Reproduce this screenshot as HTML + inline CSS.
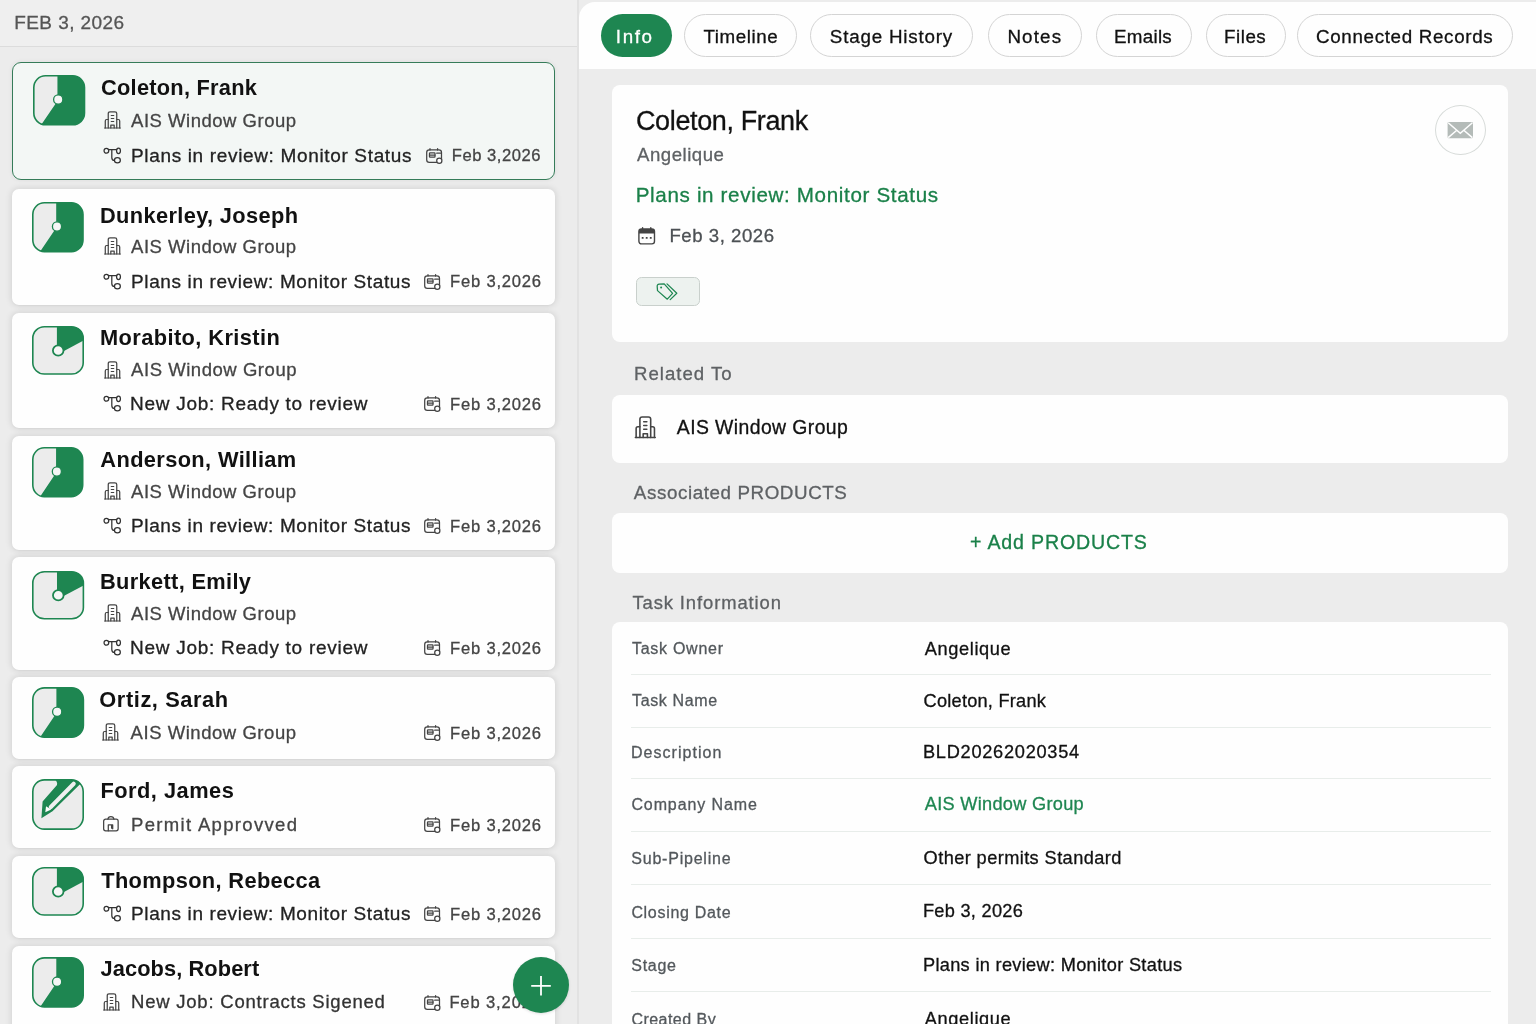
<!DOCTYPE html>
<html lang="en"><head><meta charset="utf-8"><title>Tasks</title>
<style>
html,body{margin:0;padding:0}
body{width:1536px;height:1024px;overflow:hidden;position:relative;background:#ececec;font-family:"Liberation Sans",sans-serif;}
#left{position:absolute;left:0;top:0;width:578px;height:1024px;background:#ececec}
#layer{position:absolute;left:0;top:0;width:1536px;height:1024px;will-change:transform}
.b,.t,.i{position:absolute}
.t{display:block;line-height:1;white-space:nowrap;-webkit-text-stroke:0.3px currentColor}
.t.bd{-webkit-text-stroke:0}
.i{display:block;overflow:visible}
</style></head><body>
<div id="left"></div>
<div id="layer">
<div class="b" style="left:0px;top:0px;width:578px;height:47px;background:#efefef;border-bottom:1px solid #dcdcdc;box-sizing:border-box;"></div>
<span class="t " style="left:14.23px;top:13px;font-size:19.0px;color:#555;letter-spacing:0.427px;">FEB 3, 2026</span>
<div class="b" style="left:12px;top:61.5px;width:543px;height:118.0px;background:#f3f7f5;border:1.5px solid #357c59;border-radius:9px;box-sizing:border-box;box-shadow:0 0 5px rgba(0,0,0,.07);"></div>
<svg class="i" style="left:32.75px;top:74.9px" width="52.3" height="50.6" viewBox="0 0 52 50" preserveAspectRatio="none"><defs><clipPath id="c74"><rect x="0.8" y="0.8" width="50.4" height="48.4" rx="11.6"/></clipPath></defs><rect x="0.8" y="0.8" width="50.4" height="48.4" rx="11.6" fill="#ececec"/><g clip-path="url(#c74)"><path d="M24.3 0H52V50H7.6L25 24.6L24.3 20Z" fill="#1e8651"/></g><rect x="0.8" y="0.8" width="50.4" height="48.4" rx="11.6" fill="none" stroke="#1e8651" stroke-width="1.6"/><circle cx="25.1" cy="24.3" r="4.6" fill="#f6f6f6" stroke="#1e8651" stroke-width="1.3"/></svg>
<span class="t bd" style="left:101.06px;top:77px;font-size:21.8px;color:#111;letter-spacing:0.251px;font-weight:700;">Coleton, Frank</span>
<svg class="i" style="left:103.6px;top:110.89999999999999px" width="17" height="17.8" viewBox="0 0 17 18" ><g fill="none" stroke="#444" stroke-width="1.25" stroke-linejoin="round" stroke-linecap="round"><path d="M0.6 17.2H16.4"/><path d="M4.2 17.2V2.6Q4.2 0.8 6 0.8H11Q12.8 0.8 12.8 2.6V17.2"/><path d="M4.2 8.6H2.6Q1.2 8.6 1.2 10V17.2"/><path d="M12.8 8.6H14.4Q15.8 8.6 15.8 10V17.2"/><path d="M6.8 17.2V14.2H10.2V17.2"/><path d="M7.2 4.6H9.8M7.2 7.6H9.8M7.2 10.6H9.8" stroke-width="1.1"/></g></svg>
<span class="t " style="left:131.11px;top:112px;font-size:18.5px;color:#444;letter-spacing:0.509px;">AIS Window Group</span>
<svg class="i" style="left:103px;top:146.5px" width="19" height="17" viewBox="0 0 19 17" ><g fill="none" stroke="#333" stroke-width="1.25" stroke-linecap="round"><circle cx="3.4" cy="3.8" r="2.35"/><ellipse cx="15.5" cy="3.8" rx="1.95" ry="2.75"/><ellipse cx="14.4" cy="13.2" rx="2.95" ry="2.55"/><path d="M5.4 2.6H13.8"/><path d="M8.8 2.6V10.4Q8.8 13.4 11.4 13.4"/></g></svg>
<span class="t " style="left:131.00px;top:146px;font-size:19.0px;color:#222;letter-spacing:0.656px;">Plans in review: Monitor Status</span>
<svg class="i" style="left:425.8px;top:147.6px" width="16.6" height="16" viewBox="0 0 16.6 16" ><g fill="none" stroke="#444" stroke-width="1.25" stroke-linecap="round" stroke-linejoin="round"><rect x="0.7" y="1.8" width="14.8" height="12.6" rx="2.6"/><path d="M4 0.6V2M11.6 0.6V2"/><rect x="3.5" y="4.9" width="5.5" height="4.3" rx="0.5"/><path d="M3.5 7.05H9M10.7 5.2H14.6"/><circle cx="13.3" cy="12.7" r="2.6" fill="#fff"/></g></svg>
<span class="t " style="left:451.78px;top:148px;font-size:16.6px;color:#444;letter-spacing:0.534px;">Feb 3,2026</span>
<div class="b" style="left:12px;top:189px;width:543px;height:116.30000000000001px;background:#fefefe;border-radius:7px;box-shadow:0 0 6px 1px rgba(0,0,0,.105),0 1px 2px rgba(0,0,0,.04);"></div>
<svg class="i" style="left:32.3px;top:202.3px" width="51.8" height="50.4" viewBox="0 0 52 50" preserveAspectRatio="none"><defs><clipPath id="c202"><rect x="0.8" y="0.8" width="50.4" height="48.4" rx="11.6"/></clipPath></defs><rect x="0.8" y="0.8" width="50.4" height="48.4" rx="11.6" fill="#ececec"/><g clip-path="url(#c202)"><path d="M24.3 0H52V50H7.6L25 24.6L24.3 20Z" fill="#1e8651"/></g><rect x="0.8" y="0.8" width="50.4" height="48.4" rx="11.6" fill="none" stroke="#1e8651" stroke-width="1.6"/><circle cx="25.1" cy="24.3" r="4.6" fill="#f6f6f6" stroke="#1e8651" stroke-width="1.3"/></svg>
<span class="t bd" style="left:100.00px;top:205px;font-size:21.8px;color:#111;letter-spacing:0.359px;font-weight:700;">Dunkerley, Joseph</span>
<svg class="i" style="left:103.6px;top:237.10000000000002px" width="17" height="17.8" viewBox="0 0 17 18" ><g fill="none" stroke="#444" stroke-width="1.25" stroke-linejoin="round" stroke-linecap="round"><path d="M0.6 17.2H16.4"/><path d="M4.2 17.2V2.6Q4.2 0.8 6 0.8H11Q12.8 0.8 12.8 2.6V17.2"/><path d="M4.2 8.6H2.6Q1.2 8.6 1.2 10V17.2"/><path d="M12.8 8.6H14.4Q15.8 8.6 15.8 10V17.2"/><path d="M6.8 17.2V14.2H10.2V17.2"/><path d="M7.2 4.6H9.8M7.2 7.6H9.8M7.2 10.6H9.8" stroke-width="1.1"/></g></svg>
<span class="t " style="left:131.11px;top:238px;font-size:18.5px;color:#444;letter-spacing:0.509px;">AIS Window Group</span>
<svg class="i" style="left:103px;top:272.5px" width="19" height="17" viewBox="0 0 19 17" ><g fill="none" stroke="#333" stroke-width="1.25" stroke-linecap="round"><circle cx="3.4" cy="3.8" r="2.35"/><ellipse cx="15.5" cy="3.8" rx="1.95" ry="2.75"/><ellipse cx="14.4" cy="13.2" rx="2.95" ry="2.55"/><path d="M5.4 2.6H13.8"/><path d="M8.8 2.6V10.4Q8.8 13.4 11.4 13.4"/></g></svg>
<span class="t " style="left:131.00px;top:272px;font-size:19.0px;color:#222;letter-spacing:0.622px;">Plans in review: Monitor Status</span>
<svg class="i" style="left:423.6px;top:273.59999999999997px" width="16.6" height="16" viewBox="0 0 16.6 16" ><g fill="none" stroke="#444" stroke-width="1.25" stroke-linecap="round" stroke-linejoin="round"><rect x="0.7" y="1.8" width="14.8" height="12.6" rx="2.6"/><path d="M4 0.6V2M11.6 0.6V2"/><rect x="3.5" y="4.9" width="5.5" height="4.3" rx="0.5"/><path d="M3.5 7.05H9M10.7 5.2H14.6"/><circle cx="13.3" cy="12.7" r="2.6" fill="#fff"/></g></svg>
<span class="t " style="left:450.00px;top:274px;font-size:16.6px;color:#444;letter-spacing:0.793px;">Feb 3,2026</span>
<div class="b" style="left:12px;top:312.8px;width:543px;height:115.59999999999997px;background:#fefefe;border-radius:7px;box-shadow:0 0 6px 1px rgba(0,0,0,.105),0 1px 2px rgba(0,0,0,.04);"></div>
<svg class="i" style="left:31.9px;top:326.1px" width="52" height="48.8" viewBox="0 0 52 50" preserveAspectRatio="none"><defs><clipPath id="c326"><rect x="0.8" y="0.8" width="50.4" height="48.4" rx="11.6"/></clipPath></defs><rect x="0.8" y="0.8" width="50.4" height="48.4" rx="11.6" fill="#ececec"/><g clip-path="url(#c326)"><path d="M24.9 0H52V14.6L26.4 28.6L24.9 25Z" fill="#1e8651"/></g><rect x="0.8" y="0.8" width="50.4" height="48.4" rx="11.6" fill="none" stroke="#1e8651" stroke-width="1.6"/><circle cx="26.2" cy="25.1" r="5.3" fill="#f6f6f6" stroke="#1e8651" stroke-width="1.8"/></svg>
<span class="t bd" style="left:100.00px;top:327px;font-size:21.8px;color:#111;letter-spacing:0.413px;font-weight:700;">Morabito, Kristin</span>
<svg class="i" style="left:103.6px;top:360.6px" width="17" height="17.8" viewBox="0 0 17 18" ><g fill="none" stroke="#444" stroke-width="1.25" stroke-linejoin="round" stroke-linecap="round"><path d="M0.6 17.2H16.4"/><path d="M4.2 17.2V2.6Q4.2 0.8 6 0.8H11Q12.8 0.8 12.8 2.6V17.2"/><path d="M4.2 8.6H2.6Q1.2 8.6 1.2 10V17.2"/><path d="M12.8 8.6H14.4Q15.8 8.6 15.8 10V17.2"/><path d="M6.8 17.2V14.2H10.2V17.2"/><path d="M7.2 4.6H9.8M7.2 7.6H9.8M7.2 10.6H9.8" stroke-width="1.1"/></g></svg>
<span class="t " style="left:131.11px;top:361px;font-size:18.5px;color:#444;letter-spacing:0.538px;">AIS Window Group</span>
<svg class="i" style="left:103px;top:394.7px" width="19" height="17" viewBox="0 0 19 17" ><g fill="none" stroke="#333" stroke-width="1.25" stroke-linecap="round"><circle cx="3.4" cy="3.8" r="2.35"/><ellipse cx="15.5" cy="3.8" rx="1.95" ry="2.75"/><ellipse cx="14.4" cy="13.2" rx="2.95" ry="2.55"/><path d="M5.4 2.6H13.8"/><path d="M8.8 2.6V10.4Q8.8 13.4 11.4 13.4"/></g></svg>
<span class="t " style="left:130.00px;top:394px;font-size:19.0px;color:#222;letter-spacing:0.729px;">New Job: Ready to review</span>
<svg class="i" style="left:423.6px;top:396.09999999999997px" width="16.6" height="16" viewBox="0 0 16.6 16" ><g fill="none" stroke="#444" stroke-width="1.25" stroke-linecap="round" stroke-linejoin="round"><rect x="0.7" y="1.8" width="14.8" height="12.6" rx="2.6"/><path d="M4 0.6V2M11.6 0.6V2"/><rect x="3.5" y="4.9" width="5.5" height="4.3" rx="0.5"/><path d="M3.5 7.05H9M10.7 5.2H14.6"/><circle cx="13.3" cy="12.7" r="2.6" fill="#fff"/></g></svg>
<span class="t " style="left:450.00px;top:397px;font-size:16.6px;color:#444;letter-spacing:0.793px;">Feb 3,2026</span>
<div class="b" style="left:12px;top:436px;width:543px;height:114.29999999999995px;background:#fefefe;border-radius:7px;box-shadow:0 0 6px 1px rgba(0,0,0,.105),0 1px 2px rgba(0,0,0,.04);"></div>
<svg class="i" style="left:32.4px;top:447.25px" width="51.5" height="50.5" viewBox="0 0 52 50" preserveAspectRatio="none"><defs><clipPath id="c447"><rect x="0.8" y="0.8" width="50.4" height="48.4" rx="11.6"/></clipPath></defs><rect x="0.8" y="0.8" width="50.4" height="48.4" rx="11.6" fill="#ececec"/><g clip-path="url(#c447)"><path d="M24.3 0H52V50H7.6L25 24.6L24.3 20Z" fill="#1e8651"/></g><rect x="0.8" y="0.8" width="50.4" height="48.4" rx="11.6" fill="none" stroke="#1e8651" stroke-width="1.6"/><circle cx="25.1" cy="24.3" r="4.6" fill="#f6f6f6" stroke="#1e8651" stroke-width="1.3"/></svg>
<span class="t bd" style="left:100.36px;top:449px;font-size:21.8px;color:#111;letter-spacing:0.368px;font-weight:700;">Anderson, William</span>
<svg class="i" style="left:103.6px;top:482.3px" width="17" height="17.8" viewBox="0 0 17 18" ><g fill="none" stroke="#444" stroke-width="1.25" stroke-linejoin="round" stroke-linecap="round"><path d="M0.6 17.2H16.4"/><path d="M4.2 17.2V2.6Q4.2 0.8 6 0.8H11Q12.8 0.8 12.8 2.6V17.2"/><path d="M4.2 8.6H2.6Q1.2 8.6 1.2 10V17.2"/><path d="M12.8 8.6H14.4Q15.8 8.6 15.8 10V17.2"/><path d="M6.8 17.2V14.2H10.2V17.2"/><path d="M7.2 4.6H9.8M7.2 7.6H9.8M7.2 10.6H9.8" stroke-width="1.1"/></g></svg>
<span class="t " style="left:131.11px;top:483px;font-size:18.5px;color:#444;letter-spacing:0.509px;">AIS Window Group</span>
<svg class="i" style="left:103px;top:517px" width="19" height="17" viewBox="0 0 19 17" ><g fill="none" stroke="#333" stroke-width="1.25" stroke-linecap="round"><circle cx="3.4" cy="3.8" r="2.35"/><ellipse cx="15.5" cy="3.8" rx="1.95" ry="2.75"/><ellipse cx="14.4" cy="13.2" rx="2.95" ry="2.55"/><path d="M5.4 2.6H13.8"/><path d="M8.8 2.6V10.4Q8.8 13.4 11.4 13.4"/></g></svg>
<span class="t " style="left:131.00px;top:516px;font-size:19.0px;color:#222;letter-spacing:0.622px;">Plans in review: Monitor Status</span>
<svg class="i" style="left:423.6px;top:518.4px" width="16.6" height="16" viewBox="0 0 16.6 16" ><g fill="none" stroke="#444" stroke-width="1.25" stroke-linecap="round" stroke-linejoin="round"><rect x="0.7" y="1.8" width="14.8" height="12.6" rx="2.6"/><path d="M4 0.6V2M11.6 0.6V2"/><rect x="3.5" y="4.9" width="5.5" height="4.3" rx="0.5"/><path d="M3.5 7.05H9M10.7 5.2H14.6"/><circle cx="13.3" cy="12.7" r="2.6" fill="#fff"/></g></svg>
<span class="t " style="left:450.00px;top:519px;font-size:16.6px;color:#444;letter-spacing:0.793px;">Feb 3,2026</span>
<div class="b" style="left:12px;top:557px;width:543px;height:113.29999999999995px;background:#fefefe;border-radius:7px;box-shadow:0 0 6px 1px rgba(0,0,0,.105),0 1px 2px rgba(0,0,0,.04);"></div>
<svg class="i" style="left:31.7px;top:570.8px" width="52.2" height="48.5" viewBox="0 0 52 50" preserveAspectRatio="none"><defs><clipPath id="c570"><rect x="0.8" y="0.8" width="50.4" height="48.4" rx="11.6"/></clipPath></defs><rect x="0.8" y="0.8" width="50.4" height="48.4" rx="11.6" fill="#ececec"/><g clip-path="url(#c570)"><path d="M24.9 0H52V14.6L26.4 28.6L24.9 25Z" fill="#1e8651"/></g><rect x="0.8" y="0.8" width="50.4" height="48.4" rx="11.6" fill="none" stroke="#1e8651" stroke-width="1.6"/><circle cx="26.2" cy="25.1" r="5.3" fill="#f6f6f6" stroke="#1e8651" stroke-width="1.8"/></svg>
<span class="t bd" style="left:100.00px;top:571px;font-size:21.8px;color:#111;letter-spacing:0.337px;font-weight:700;">Burkett, Emily</span>
<svg class="i" style="left:103.6px;top:604.0px" width="17" height="17.8" viewBox="0 0 17 18" ><g fill="none" stroke="#444" stroke-width="1.25" stroke-linejoin="round" stroke-linecap="round"><path d="M0.6 17.2H16.4"/><path d="M4.2 17.2V2.6Q4.2 0.8 6 0.8H11Q12.8 0.8 12.8 2.6V17.2"/><path d="M4.2 8.6H2.6Q1.2 8.6 1.2 10V17.2"/><path d="M12.8 8.6H14.4Q15.8 8.6 15.8 10V17.2"/><path d="M6.8 17.2V14.2H10.2V17.2"/><path d="M7.2 4.6H9.8M7.2 7.6H9.8M7.2 10.6H9.8" stroke-width="1.1"/></g></svg>
<span class="t " style="left:131.11px;top:605px;font-size:18.5px;color:#444;letter-spacing:0.509px;">AIS Window Group</span>
<svg class="i" style="left:103px;top:639px" width="19" height="17" viewBox="0 0 19 17" ><g fill="none" stroke="#333" stroke-width="1.25" stroke-linecap="round"><circle cx="3.4" cy="3.8" r="2.35"/><ellipse cx="15.5" cy="3.8" rx="1.95" ry="2.75"/><ellipse cx="14.4" cy="13.2" rx="2.95" ry="2.55"/><path d="M5.4 2.6H13.8"/><path d="M8.8 2.6V10.4Q8.8 13.4 11.4 13.4"/></g></svg>
<span class="t " style="left:130.00px;top:638px;font-size:19.0px;color:#222;letter-spacing:0.729px;">New Job: Ready to review</span>
<svg class="i" style="left:423.6px;top:640.4px" width="16.6" height="16" viewBox="0 0 16.6 16" ><g fill="none" stroke="#444" stroke-width="1.25" stroke-linecap="round" stroke-linejoin="round"><rect x="0.7" y="1.8" width="14.8" height="12.6" rx="2.6"/><path d="M4 0.6V2M11.6 0.6V2"/><rect x="3.5" y="4.9" width="5.5" height="4.3" rx="0.5"/><path d="M3.5 7.05H9M10.7 5.2H14.6"/><circle cx="13.3" cy="12.7" r="2.6" fill="#fff"/></g></svg>
<span class="t " style="left:450.00px;top:641px;font-size:16.6px;color:#444;letter-spacing:0.793px;">Feb 3,2026</span>
<div class="b" style="left:12px;top:677px;width:543px;height:82.39999999999998px;background:#fefefe;border-radius:7px;box-shadow:0 0 6px 1px rgba(0,0,0,.105),0 1px 2px rgba(0,0,0,.04);"></div>
<svg class="i" style="left:31.9px;top:687.25px" width="52.2" height="51" viewBox="0 0 52 50" preserveAspectRatio="none"><defs><clipPath id="c687"><rect x="0.8" y="0.8" width="50.4" height="48.4" rx="11.6"/></clipPath></defs><rect x="0.8" y="0.8" width="50.4" height="48.4" rx="11.6" fill="#ececec"/><g clip-path="url(#c687)"><path d="M24.3 0H52V50H7.6L25 24.6L24.3 20Z" fill="#1e8651"/></g><rect x="0.8" y="0.8" width="50.4" height="48.4" rx="11.6" fill="none" stroke="#1e8651" stroke-width="1.6"/><circle cx="25.1" cy="24.3" r="4.6" fill="#f6f6f6" stroke="#1e8651" stroke-width="1.3"/></svg>
<span class="t bd" style="left:99.27px;top:689px;font-size:21.8px;color:#111;letter-spacing:0.591px;font-weight:700;">Ortiz, Sarah</span>
<svg class="i" style="left:102.4px;top:723.4px" width="17" height="17.8" viewBox="0 0 17 18" ><g fill="none" stroke="#444" stroke-width="1.25" stroke-linejoin="round" stroke-linecap="round"><path d="M0.6 17.2H16.4"/><path d="M4.2 17.2V2.6Q4.2 0.8 6 0.8H11Q12.8 0.8 12.8 2.6V17.2"/><path d="M4.2 8.6H2.6Q1.2 8.6 1.2 10V17.2"/><path d="M12.8 8.6H14.4Q15.8 8.6 15.8 10V17.2"/><path d="M6.8 17.2V14.2H10.2V17.2"/><path d="M7.2 4.6H9.8M7.2 7.6H9.8M7.2 10.6H9.8" stroke-width="1.1"/></g></svg>
<span class="t " style="left:130.58px;top:724px;font-size:18.5px;color:#444;letter-spacing:0.542px;">AIS Window Group</span>
<svg class="i" style="left:423.6px;top:725.4px" width="16.6" height="16" viewBox="0 0 16.6 16" ><g fill="none" stroke="#444" stroke-width="1.25" stroke-linecap="round" stroke-linejoin="round"><rect x="0.7" y="1.8" width="14.8" height="12.6" rx="2.6"/><path d="M4 0.6V2M11.6 0.6V2"/><rect x="3.5" y="4.9" width="5.5" height="4.3" rx="0.5"/><path d="M3.5 7.05H9M10.7 5.2H14.6"/><circle cx="13.3" cy="12.7" r="2.6" fill="#fff"/></g></svg>
<span class="t " style="left:450.00px;top:726px;font-size:16.6px;color:#444;letter-spacing:0.793px;">Feb 3,2026</span>
<div class="b" style="left:12px;top:765.6px;width:543px;height:82.79999999999995px;background:#fefefe;border-radius:7px;box-shadow:0 0 6px 1px rgba(0,0,0,.105),0 1px 2px rgba(0,0,0,.04);"></div>
<svg class="i" style="left:31.9px;top:778.6px" width="52" height="51" viewBox="0 0 52 50" preserveAspectRatio="none"><defs><clipPath id="c778"><rect x="0.8" y="0.8" width="50.4" height="48.4" rx="11.6"/></clipPath></defs><rect x="0.8" y="0.8" width="50.4" height="48.4" rx="11.6" fill="#ececec"/><g clip-path="url(#c778)"><path d="M22.5 0Q25.8 3 25 6L10.6 22L9.4 38.4L20.5 31.6L48.5 4.6L52 0Z" fill="#1e8651"/><path d="M18.8 27.4L41.7 4.7" stroke="#efefef" stroke-width="4.1" stroke-linecap="round"/><path d="M14 26.6L19.2 29.8L13.3 32.6Z" fill="#fdfdfd"/></g><rect x="0.8" y="0.8" width="50.4" height="48.4" rx="11.6" fill="none" stroke="#1e8651" stroke-width="1.6"/></svg>
<span class="t bd" style="left:100.39px;top:780px;font-size:21.8px;color:#111;letter-spacing:0.504px;font-weight:700;">Ford, James</span>
<svg class="i" style="left:103.2px;top:816.4px" width="15.8" height="15.5" viewBox="0 0 15.8 15.5" ><g fill="none" stroke="#444" stroke-width="1.25" stroke-linejoin="round" stroke-linecap="round"><rect x="0.65" y="3.2" width="14.5" height="11.6" rx="2"/><path d="M4.9 3.2Q5.2 0.65 7.9 0.65Q10.6 0.65 10.9 3.2"/><path d="M5.3 14.8V8.9H9.7V12.8M8.6 8.9V12.2"/></g></svg>
<span class="t " style="left:131.00px;top:816px;font-size:18.5px;color:#444;letter-spacing:1.333px;">Permit Approvved</span>
<svg class="i" style="left:423.6px;top:817.1999999999999px" width="16.6" height="16" viewBox="0 0 16.6 16" ><g fill="none" stroke="#444" stroke-width="1.25" stroke-linecap="round" stroke-linejoin="round"><rect x="0.7" y="1.8" width="14.8" height="12.6" rx="2.6"/><path d="M4 0.6V2M11.6 0.6V2"/><rect x="3.5" y="4.9" width="5.5" height="4.3" rx="0.5"/><path d="M3.5 7.05H9M10.7 5.2H14.6"/><circle cx="13.3" cy="12.7" r="2.6" fill="#fff"/></g></svg>
<span class="t " style="left:450.00px;top:818px;font-size:16.6px;color:#444;letter-spacing:0.793px;">Feb 3,2026</span>
<div class="b" style="left:12px;top:855.9px;width:543px;height:82.10000000000002px;background:#fefefe;border-radius:7px;box-shadow:0 0 6px 1px rgba(0,0,0,.105),0 1px 2px rgba(0,0,0,.04);"></div>
<svg class="i" style="left:31.9px;top:867.1px" width="52" height="48.8" viewBox="0 0 52 50" preserveAspectRatio="none"><defs><clipPath id="c867"><rect x="0.8" y="0.8" width="50.4" height="48.4" rx="11.6"/></clipPath></defs><rect x="0.8" y="0.8" width="50.4" height="48.4" rx="11.6" fill="#ececec"/><g clip-path="url(#c867)"><path d="M24.9 0H52V14.6L26.4 28.6L24.9 25Z" fill="#1e8651"/></g><rect x="0.8" y="0.8" width="50.4" height="48.4" rx="11.6" fill="none" stroke="#1e8651" stroke-width="1.6"/><circle cx="26.2" cy="25.1" r="5.3" fill="#f6f6f6" stroke="#1e8651" stroke-width="1.8"/></svg>
<span class="t bd" style="left:101.23px;top:870px;font-size:21.8px;color:#111;letter-spacing:0.361px;font-weight:700;">Thompson, Rebecca</span>
<svg class="i" style="left:103px;top:905px" width="19" height="17" viewBox="0 0 19 17" ><g fill="none" stroke="#333" stroke-width="1.25" stroke-linecap="round"><circle cx="3.4" cy="3.8" r="2.35"/><ellipse cx="15.5" cy="3.8" rx="1.95" ry="2.75"/><ellipse cx="14.4" cy="13.2" rx="2.95" ry="2.55"/><path d="M5.4 2.6H13.8"/><path d="M8.8 2.6V10.4Q8.8 13.4 11.4 13.4"/></g></svg>
<span class="t " style="left:131.00px;top:904px;font-size:19.0px;color:#222;letter-spacing:0.622px;">Plans in review: Monitor Status</span>
<svg class="i" style="left:423.6px;top:906.4px" width="16.6" height="16" viewBox="0 0 16.6 16" ><g fill="none" stroke="#444" stroke-width="1.25" stroke-linecap="round" stroke-linejoin="round"><rect x="0.7" y="1.8" width="14.8" height="12.6" rx="2.6"/><path d="M4 0.6V2M11.6 0.6V2"/><rect x="3.5" y="4.9" width="5.5" height="4.3" rx="0.5"/><path d="M3.5 7.05H9M10.7 5.2H14.6"/><circle cx="13.3" cy="12.7" r="2.6" fill="#fff"/></g></svg>
<span class="t " style="left:450.00px;top:907px;font-size:16.6px;color:#444;letter-spacing:0.793px;">Feb 3,2026</span>
<div class="b" style="left:12px;top:946px;width:543px;height:94px;background:#fefefe;border-radius:7px;box-shadow:0 0 6px 1px rgba(0,0,0,.105),0 1px 2px rgba(0,0,0,.04);"></div>
<svg class="i" style="left:31.9px;top:956.7px" width="52" height="50.8" viewBox="0 0 52 50" preserveAspectRatio="none"><defs><clipPath id="c956"><rect x="0.8" y="0.8" width="50.4" height="48.4" rx="11.6"/></clipPath></defs><rect x="0.8" y="0.8" width="50.4" height="48.4" rx="11.6" fill="#ececec"/><g clip-path="url(#c956)"><path d="M24.3 0H52V50H7.6L25 24.6L24.3 20Z" fill="#1e8651"/></g><rect x="0.8" y="0.8" width="50.4" height="48.4" rx="11.6" fill="none" stroke="#1e8651" stroke-width="1.6"/><circle cx="25.1" cy="24.3" r="4.6" fill="#f6f6f6" stroke="#1e8651" stroke-width="1.3"/></svg>
<span class="t bd" style="left:100.49px;top:958px;font-size:21.8px;color:#111;letter-spacing:0.095px;font-weight:700;">Jacobs, Robert</span>
<svg class="i" style="left:103.2px;top:992.6999999999999px" width="17" height="17.8" viewBox="0 0 17 18" ><g fill="none" stroke="#444" stroke-width="1.25" stroke-linejoin="round" stroke-linecap="round"><path d="M0.6 17.2H16.4"/><path d="M4.2 17.2V2.6Q4.2 0.8 6 0.8H11Q12.8 0.8 12.8 2.6V17.2"/><path d="M4.2 8.6H2.6Q1.2 8.6 1.2 10V17.2"/><path d="M12.8 8.6H14.4Q15.8 8.6 15.8 10V17.2"/><path d="M6.8 17.2V14.2H10.2V17.2"/><path d="M7.2 4.6H9.8M7.2 7.6H9.8M7.2 10.6H9.8" stroke-width="1.1"/></g></svg>
<span class="t " style="left:131.00px;top:993px;font-size:18.5px;color:#333;letter-spacing:0.778px;">New Job: Contracts Sigened</span>
<svg class="i" style="left:423.6px;top:994.8px" width="16.6" height="16" viewBox="0 0 16.6 16" ><g fill="none" stroke="#444" stroke-width="1.25" stroke-linecap="round" stroke-linejoin="round"><rect x="0.7" y="1.8" width="14.8" height="12.6" rx="2.6"/><path d="M4 0.6V2M11.6 0.6V2"/><rect x="3.5" y="4.9" width="5.5" height="4.3" rx="0.5"/><path d="M3.5 7.05H9M10.7 5.2H14.6"/><circle cx="13.3" cy="12.7" r="2.6" fill="#fff"/></g></svg>
<span class="t " style="left:449.38px;top:995px;font-size:16.6px;color:#444;letter-spacing:0.860px;">Feb 3,2026</span>
<div class="b" style="left:513px;top:957px;width:56px;height:56px;background:#1e8651;border-radius:50%;box-shadow:0 1px 3px rgba(0,0,0,.12);"><svg width="56" height="56" viewBox="0 0 56 56"><path d="M18.2 28.8H37.8M28 19V38.6" stroke="#fff" stroke-width="1.8" fill="none"/></svg></div>
<div class="b" style="left:577px;top:0px;width:1.5px;height:1024px;background:#e2e2e2;"></div>
<div class="b" style="left:578.8px;top:1.7px;width:960px;height:67.1px;background:#fefefe;border-top-left-radius:16px;"></div>
<div class="b" style="left:600.9px;top:14.2px;width:70.89999999999998px;height:42.6px;background:#1e8651;border-radius:22px;"></div>
<span class="t " style="left:615.86px;top:28px;font-size:18.8px;color:#fff;letter-spacing:1.552px;">Info</span>
<div class="b" style="left:684.4px;top:13.6px;width:113.10000000000002px;height:43.6px;background:#fefefe;border:1px solid #d4d4d4;border-radius:22px;box-sizing:border-box;"></div>
<span class="t " style="left:703.48px;top:28px;font-size:18.8px;color:#111;letter-spacing:0.561px;">Timeline</span>
<div class="b" style="left:810px;top:13.6px;width:163.29999999999995px;height:43.6px;background:#fefefe;border:1px solid #d4d4d4;border-radius:22px;box-sizing:border-box;"></div>
<span class="t " style="left:829.87px;top:28px;font-size:18.8px;color:#111;letter-spacing:0.796px;">Stage History</span>
<div class="b" style="left:987.5px;top:13.6px;width:94.5px;height:43.6px;background:#fefefe;border:1px solid #d4d4d4;border-radius:22px;box-sizing:border-box;"></div>
<span class="t " style="left:1007.40px;top:28px;font-size:18.8px;color:#111;letter-spacing:1.156px;">Notes</span>
<div class="b" style="left:1095.5px;top:13.6px;width:96.70000000000005px;height:43.6px;background:#fefefe;border:1px solid #d4d4d4;border-radius:22px;box-sizing:border-box;"></div>
<span class="t " style="left:1114.00px;top:28px;font-size:18.8px;color:#111;letter-spacing:0.275px;">Emails</span>
<div class="b" style="left:1205.5px;top:13.6px;width:80.29999999999995px;height:43.6px;background:#fefefe;border:1px solid #d4d4d4;border-radius:22px;box-sizing:border-box;"></div>
<span class="t " style="left:1224.09px;top:28px;font-size:18.8px;color:#111;letter-spacing:0.494px;">Files</span>
<div class="b" style="left:1297px;top:13.6px;width:216px;height:43.6px;background:#fefefe;border:1px solid #d4d4d4;border-radius:22px;box-sizing:border-box;"></div>
<span class="t " style="left:1315.99px;top:28px;font-size:18.8px;color:#111;letter-spacing:0.668px;">Connected Records</span>
<div class="b" style="left:612px;top:84.8px;width:896px;height:257.2px;background:#fefefe;border-radius:8px;"></div>
<span class="t " style="left:636.00px;top:108px;font-size:27px;color:#111;letter-spacing:-0.374px;">Coleton, Frank</span>
<span class="t " style="left:637.04px;top:146px;font-size:18.6px;color:#5e6164;letter-spacing:0.516px;">Angelique</span>
<span class="t " style="left:635.73px;top:185px;font-size:20.6px;color:#1a8049;letter-spacing:0.654px;">Plans in review: Monitor Status</span>
<svg class="i" style="left:637.6px;top:227.2px" width="17.4" height="17.8" viewBox="0 0 17.4 17.8" ><g fill="none" stroke="#444" stroke-width="1.4" stroke-linejoin="round" stroke-linecap="round"><rect x="0.9" y="2" width="15.6" height="14.9" rx="2.6"/><path d="M4.6 0.7V2.4M12.8 0.7V2.4"/></g><path d="M0.9 6.4V4.6Q0.9 2 3.5 2H13.9Q16.5 2 16.5 4.6V6.4Z" fill="#444"/><g fill="#444"><rect x="3.7" y="9.9" width="1.9" height="1.9" rx=".4"/><rect x="7.75" y="9.9" width="1.9" height="1.9" rx=".4"/><rect x="11.8" y="9.9" width="1.9" height="1.9" rx=".4"/></g></svg>
<span class="t " style="left:669.44px;top:227px;font-size:18.6px;color:#4c5054;letter-spacing:0.539px;">Feb 3, 2026</span>
<div class="b" style="left:636.1px;top:277.3px;width:63.8px;height:29px;background:#edf2ef;border:1px solid #c9d0cc;border-radius:5.5px;box-sizing:border-box;"></div>
<svg class="i" style="left:656.4px;top:283.4px" width="22" height="17.4" viewBox="0 0 22 17.4" ><g fill="none" stroke="#1e8651" stroke-width="1.25" stroke-linejoin="round" stroke-linecap="round"><path d="M1.2 3.6Q0.9 1.3 3.2 1.2L8.2 0.9L16.6 10.4L11.3 16.2L1.5 7.6Z"/><path d="M11 0.9L20.8 10.3L14.2 16.6"/></g><circle cx="5.1" cy="4.5" r="1" fill="#1e8651"/></svg>
<div class="b" style="left:1434.5px;top:104.9px;width:51px;height:50.4px;border:1px solid #d7dbd9;border-radius:50%;box-sizing:border-box;background:#fefefe;"><svg width="49" height="48.4" viewBox="0 0 49 48.4" style="display:block"><g transform="translate(11.6 16)"><rect x="0" y="0" width="25.4" height="16.2" rx="1.2" fill="#b4bbb8"/><path d="M0.6 0.8L12.7 11.2L24.8 0.8" fill="none" stroke="#fefefe" stroke-width="1.5"/><path d="M0.6 15.6L9.2 8.2M24.8 15.6L16.2 8.2" fill="none" stroke="#fefefe" stroke-width="1.5"/></g></svg></div>
<span class="t " style="left:634.00px;top:365px;font-size:18.6px;color:#5e6164;letter-spacing:1.008px;">Related To</span>
<div class="b" style="left:612px;top:395.25px;width:896px;height:67.5px;background:#fefefe;border-radius:8px;"></div>
<svg class="i" style="left:634.2px;top:416.2px" width="22.6" height="22.6" viewBox="0 0 17 18" ><g fill="none" stroke="#444" stroke-width="1.25" stroke-linejoin="round" stroke-linecap="round"><path d="M0.6 17.2H16.4"/><path d="M4.2 17.2V2.6Q4.2 0.8 6 0.8H11Q12.8 0.8 12.8 2.6V17.2"/><path d="M4.2 8.6H2.6Q1.2 8.6 1.2 10V17.2"/><path d="M12.8 8.6H14.4Q15.8 8.6 15.8 10V17.2"/><path d="M6.8 17.2V14.2H10.2V17.2"/><path d="M7.2 4.6H9.8M7.2 7.6H9.8M7.2 10.6H9.8" stroke-width="1.1"/></g></svg>
<span class="t " style="left:676.80px;top:418px;font-size:19.4px;color:#111;letter-spacing:0.408px;">AIS Window Group</span>
<span class="t " style="left:633.84px;top:484px;font-size:18.8px;color:#5e6164;letter-spacing:0.588px;">Associated PRODUCTS</span>
<div class="b" style="left:612px;top:513.4px;width:896px;height:59.80000000000007px;background:#fefefe;border-radius:8px;"></div>
<span class="t " style="left:970.00px;top:533px;font-size:19.6px;color:#1a8049;letter-spacing:0.832px;">+ Add PRODUCTS</span>
<span class="t " style="left:632.40px;top:594px;font-size:18.4px;color:#5e6164;letter-spacing:0.907px;">Task Information</span>
<div class="b" style="left:612px;top:622px;width:896px;height:418px;background:#fefefe;border-radius:8px;"></div>
<span class="t " style="left:632.00px;top:641px;font-size:16px;color:#53585c;letter-spacing:0.722px;">Task Owner</span>
<span class="t " style="left:924.80px;top:640px;font-size:18.2px;color:#111;letter-spacing:0.616px;">Angelique</span>
<span class="t " style="left:632.00px;top:693px;font-size:16px;color:#53585c;letter-spacing:0.625px;">Task Name</span>
<span class="t " style="left:923.60px;top:692px;font-size:18.2px;color:#111;letter-spacing:0.226px;">Coleton, Frank</span>
<span class="t " style="left:631.00px;top:745px;font-size:16px;color:#53585c;letter-spacing:1.033px;">Description</span>
<span class="t " style="left:922.95px;top:743px;font-size:18.2px;color:#111;letter-spacing:0.739px;">BLD20262020354</span>
<span class="t " style="left:631.39px;top:797px;font-size:16px;color:#53585c;letter-spacing:0.905px;">Company Name</span>
<span class="t " style="left:924.80px;top:795px;font-size:18.2px;color:#1e8651;letter-spacing:0.282px;">AIS Window Group</span>
<span class="t " style="left:631.31px;top:851px;font-size:16px;color:#53585c;letter-spacing:0.774px;">Sub-Pipeline</span>
<span class="t " style="left:923.62px;top:849px;font-size:18.2px;color:#111;letter-spacing:0.412px;">Other permits Standard</span>
<span class="t " style="left:631.39px;top:905px;font-size:16px;color:#53585c;letter-spacing:0.688px;">Closing Date</span>
<span class="t " style="left:922.96px;top:902px;font-size:18.2px;color:#111;letter-spacing:0.276px;">Feb 3, 2026</span>
<span class="t " style="left:631.31px;top:958px;font-size:16px;color:#53585c;letter-spacing:0.696px;">Stage</span>
<span class="t " style="left:922.96px;top:956px;font-size:18.2px;color:#111;letter-spacing:0.313px;">Plans in review: Monitor Status</span>
<span class="t " style="left:631.39px;top:1012px;font-size:16px;color:#53585c;letter-spacing:0.471px;">Created By</span>
<span class="t " style="left:924.80px;top:1010px;font-size:18.2px;color:#111;letter-spacing:0.616px;">Angelique</span>
<div class="b" style="left:631px;top:674px;width:859.5px;height:1px;background:#e8edea;"></div>
<div class="b" style="left:631px;top:727px;width:859.5px;height:1px;background:#e8edea;"></div>
<div class="b" style="left:631px;top:778px;width:859.5px;height:1px;background:#e8edea;"></div>
<div class="b" style="left:631px;top:831px;width:859.5px;height:1px;background:#e8edea;"></div>
<div class="b" style="left:631px;top:884px;width:859.5px;height:1px;background:#e8edea;"></div>
<div class="b" style="left:631px;top:938px;width:859.5px;height:1px;background:#e8edea;"></div>
<div class="b" style="left:631px;top:991px;width:859.5px;height:1px;background:#e8edea;"></div>
</div>
</body></html>
